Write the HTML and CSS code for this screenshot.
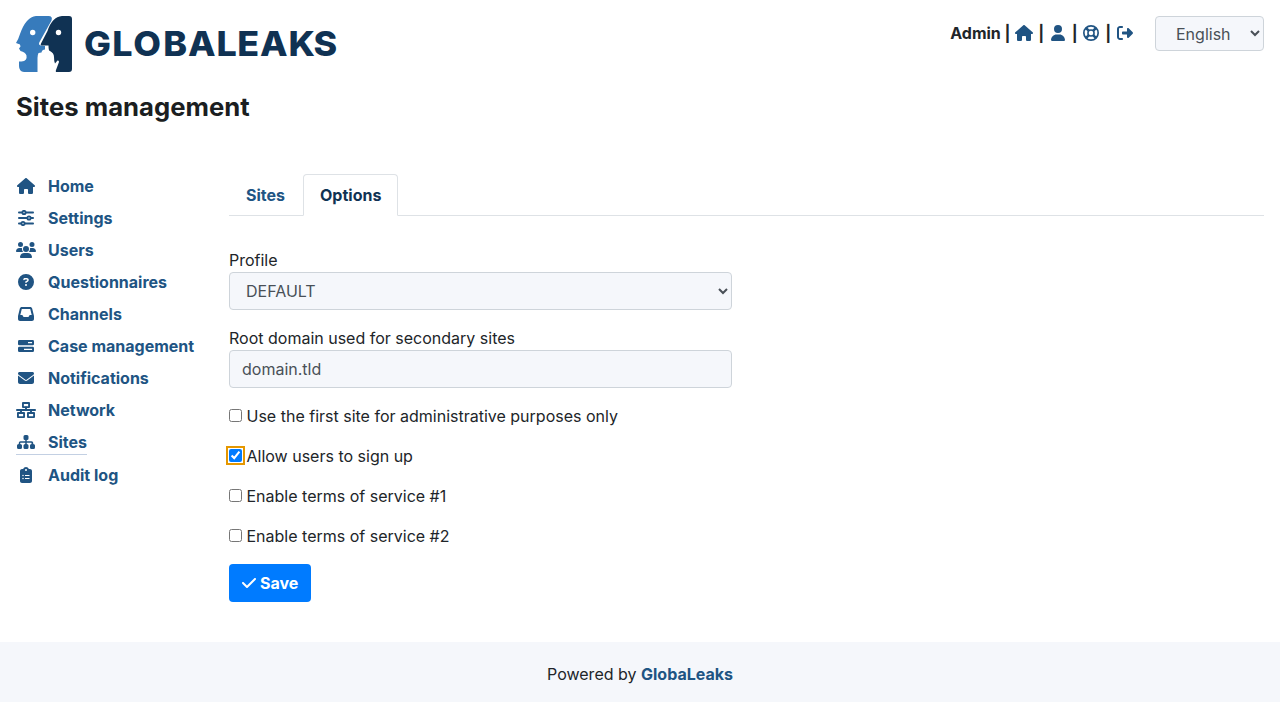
FILE: index.html
```html
<!DOCTYPE html>
<html lang="en">
<head>
<meta charset="utf-8">
<title>GlobaLeaks</title>
<link rel="stylesheet" href="styles.css">
</head>
<body>
<svg class="defs" aria-hidden="true">
  <symbol id="house" viewBox="-32 0 640 512"><path d="M575.8 255.5c0 18-15 32.1-32 32.1l-32 0 .7 160.2c0 2.7-.2 5.4-.5 8.1l0 16.2c0 22.1-17.9 40-40 40l-16 0c-1.1 0-2.2 0-3.3-.1c-1.4 .1-2.8 .1-4.2 .1L416 512l-24 0c-22.1 0-40-17.9-40-40l0-24 0-64c0-17.7-14.3-32-32-32l-64 0c-17.7 0-32 14.3-32 32l0 64 0 24c0 22.1-17.9 40-40 40l-24 0-31.9 0c-1.5 0-3-.1-4.5-.2c-1.2 .1-2.4 .2-3.6 .2l-16 0c-22.1 0-40-17.9-40-40l0-112c0-.9 0-1.9 .1-2.8l0-69.7-32 0c-18 0-32-14-32-32.1c0-9 3-17 10-24L266.4 8c7-7 15-8 22-8s15 2 21 7L564.8 231.5c8 7 12 15 11 24z"/></symbol>
  <symbol id="user" viewBox="-96 0 640 512"><path d="M224 256A128 128 0 1 0 224 0a128 128 0 1 0 0 256zm-45.7 48C79.8 304 0 383.8 0 482.3C0 498.7 13.3 512 29.7 512l388.6 0c16.4 0 29.7-13.3 29.7-29.7C448 383.8 368.2 304 269.7 304l-91.4 0z"/></symbol>
  <symbol id="ring" viewBox="-64 0 640 512"><g fill="none" stroke="currentColor"><circle cx="256" cy="256" r="229" stroke-width="54"/><circle cx="256" cy="256" r="98" stroke-width="50"/><path stroke-width="84" d="M100 100l80 80M412 100l-80 80M100 412l80-80M412 412l-80-80"/></g></symbol>
  <symbol id="logout" viewBox="-64 0 640 512"><path d="M502.600 278.600c12.500-12.500 12.500-32.800 0-45.300l-128-128c-9.200-9.200-22.900-11.900-34.900-6.900S320 115.100 320 128l0 80-128 0c-17.700 0-32 14.300-32 32l0 32c0 17.700 14.300 32 32 32l128 0 0 80c0 12.900 7.800 24.600 19.800 29.600s25.700 2.200 34.900-6.900zM160 96c17.700 0 32-14.300 32-32s-14.300-32-32-32L96 32C43 32 0 75 0 128L0 384c0 53 43 96 96 96l64 0c17.700 0 32-14.300 32-32s-14.300-32-32-32l-64 0c-17.700 0-32-14.300-32-32l0-256c0-17.700 14.300-32 32-32z"/></symbol>
  <symbol id="sliders" viewBox="-64 0 640 512"><g fill="none" stroke="currentColor" stroke-width="60" stroke-linecap="round"><path d="M30 80h106M248 80h234M30 256h266M408 256h74M30 432h74M216 432h266"/><circle cx="192" cy="80" r="52"/><circle cx="352" cy="256" r="52"/><circle cx="160" cy="432" r="52"/></g></symbol>
  <symbol id="users" viewBox="0 0 640 512"><path d="M144 0a80 80 0 1 1 0 160A80 80 0 1 1 144 0zM512 0a80 80 0 1 1 0 160A80 80 0 1 1 512 0zM0 298.700C0 239.800 47.800 192 106.700 192l42.700 0c15.900 0 31 3.500 44.600 9.700c-1.300 7.200-1.900 14.700-1.900 22.300c0 38.200 16.800 72.500 43.300 96L21.300 320C9.600 320 0 310.400 0 298.700zM405.300 320l-.7 0c26.600-23.500 43.300-57.800 43.300-96c0-7.600-.7-15-1.900-22.300c13.600-6.300 28.700-9.700 44.600-9.700l42.700 0C592.200 192 640 239.800 640 298.700c0 11.800-9.600 21.300-21.300 21.300zM224 224a96 96 0 1 1 192 0 96 96 0 1 1-192 0zM128 485.300C128 411.700 187.700 352 261.300 352l117.400 0C452.300 352 512 411.700 512 485.300c0 14.700-11.900 26.700-26.700 26.700l-330.600 0c-14.800 0-26.700-11.900-26.700-26.700z"/></symbol>
  <symbol id="question" viewBox="-64 0 640 512"><path d="M256 512A256 256 0 1 0 256 0a256 256 0 1 0 0 512zM169.800 165.300c7.900-22.300 29.100-37.300 52.800-37.300l58.300 0c34.900 0 63.100 28.300 63.100 63.100c0 22.600-12.100 43.500-31.700 54.800L280 264.400c-.2 13-10.900 23.600-24 23.600c-13.300 0-24-10.700-24-24l0-13.500c0-8.600 4.600-16.500 12.100-20.800l44.300-25.400c4.700-2.700 7.600-7.700 7.600-13.100c0-8.400-6.800-15.100-15.100-15.100l-58.300 0c-3.400 0-6.400 2.100-7.500 5.300l-.4 1.200c-4.400 12.500-18.200 19-30.600 14.600s-19-18.200-14.600-30.600l.4-1.200zM224 352a32 32 0 1 1 64 0 32 32 0 1 1-64 0z"/></symbol>
  <symbol id="inbox" viewBox="-64 0 640 512"><path d="M121 32C91.600 32 66 52 58.900 80.500L1.900 308.400C.6 313.500 0 318.700 0 323.900L0 416c0 35.300 28.700 64 64 64l384 0c35.300 0 64-28.700 64-64l0-92.100c0-5.200-.6-10.400-1.900-15.500l-57-227.900C446 52 420.400 32 391 32L121 32zm0 64l270 0 48 192-51.200 0c-12.100 0-23.200 6.800-28.600 17.700l-14.300 28.600c-5.400 10.800-16.500 17.700-28.600 17.700l-120.400 0c-12.100 0-23.200-6.800-28.600-17.700l-14.300-28.600c-5.400-10.800-16.500-17.700-28.600-17.700L73 288 121 96z"/></symbol>
  <symbol id="bars" viewBox="-64 0 640 512"><path fill-rule="evenodd" d="M44 64h424q44 0 44 44v80q0 44-44 44H44q-44 0-44-44v-80q0-44 44-44zM320 130v36h130v-36zM44 280h424q44 0 44 44v80q0 44-44 44H44q-44 0-44-44v-80q0-44 44-44zM192 346v36h258v-36z"/></symbol>
  <symbol id="mail" viewBox="-64 0 640 512"><path d="M48 64C21.500 64 0 85.500 0 112c0 15.100 7.100 29.300 19.200 38.400L236.800 313.600c11.400 8.500 27 8.500 38.400 0L492.800 150.400c12.100-9.100 19.200-23.300 19.200-38.400c0-26.500-21.500-48-48-48L48 64zM0 176L0 384c0 35.300 28.700 64 64 64l384 0c35.300 0 64-28.700 64-64l0-208L294.400 339.200c-22.800 17.100-54 17.100-76.800 0L0 176z"/></symbol>
  <symbol id="network" viewBox="0 0 640 512"><g fill="none" stroke="currentColor" stroke-width="60" stroke-linejoin="round"><path d="M222 30h196v132H222zM62 350h196v132H62zM382 350h196v132H382z"/><path stroke-linecap="round" d="M30 256h580M320 162v94M160 256v94M480 256v94"/></g></symbol>
  <symbol id="sitemap" viewBox="-32 0 640 512"><path d="M256 32h64q48 0 48 48v64q0 48-48 48h-8v40h152q56 0 56 56v32q56 0 56 48v64q0 48-48 48h-64q-48 0-48-48v-64q0-48 48-48v-32q0-8-8-8H312v40q56 0 56 48v64q0 48-48 48h-64q-48 0-48-48v-64q0-48 56-48v-40H112q-8 0-8 8v32q56 0 56 48v64q0 48-48 48H48q-48 0-48-48v-64q0-48 56-48v-32q0-56 56-56h152v-40h-8q-48 0-48-48V80q0-48 48-48z"/></symbol>
  <symbol id="clipboard" viewBox="-128 0 640 512"><path fill-rule="evenodd" d="M192 0c-41.800 0-77.400 26.700-90.500 64H64C28.700 64 0 92.700 0 128v320c0 35.300 28.700 64 64 64h256c35.300 0 64-28.700 64-64V128c0-35.300-28.700-64-64-64h-37.500C269.400 26.700 233.800 0 192 0zm0 64a32 32 0 1 1 0 64 32 32 0 1 1 0-64zM72 272a24 24 0 1 1 48 0 24 24 0 1 1-48 0zm88-16h144v32H160zM72 368a24 24 0 1 1 48 0 24 24 0 1 1-48 0zm88-16h144v32H160z"/></symbol>
  <symbol id="check" viewBox="0 0 448 512"><path d="M438.600 105.400c12.500 12.500 12.500 32.800 0 45.300l-256 256c-12.500 12.500-32.800 12.500-45.300 0l-128-128c-12.500-12.500-12.500-32.800 0-45.300s32.800-12.500 45.300 0L160 338.700 393.400 105.400c12.500-12.500 32.800-12.500 45.300 0z"/></symbol>
</svg>
<header class="header">
  <svg class="logo" viewBox="0 0 322 56" role="img" aria-label="GlobaLeaks">
    <path fill="#377bbc" d="M20 0h12.500q4.500 0 3 4.500L23.500 26q-1.500 3 1.500 3.500l4 .5v3.500q-3 0-3.500 3l-3 .5q-1 2-1 5v14H8Q3 55.500 3 50v-4.500h2.500q6-.5 5-6-1-3.500-6-4.500L3 32.500l1.500-2-.5-2L0 27Q2.500 23 4 18 10 1 20 0z"/>
    <path fill="#103253" d="M46 0h7q3 0 3 3v50q0 3-3 3H40q-.5-1 0-2l3-8q0-2-1.500-1.500L39 47.500q-1-2-1-6.500 0-4-4-6-1.500 0-1.500-5.500h-7q-1.500-.5-.5-2L31.500 15Q36 1 46 0z"/>
    <circle cx="16.700" cy="16.500" r="2.700" fill="#fff"/><circle cx="42.500" cy="16.500" r="2.700" fill="#fff"/>
    <text class="logo-text" transform="scale(1.04 1)" y="39.700" x="65.500 92.500 112.700 141.700 165.400 192.700 212.700 234.700 262 286">GLOBALEAKS</text>
  </svg>
  <div class="tools">
    <b>Admin</b><b>|</b><a><svg class="icon"><use href="#house"/></svg></a><b>|</b><a><svg class="icon"><use href="#user"/></svg></a><b>|</b><a><svg class="icon"><use href="#ring"/></svg></a><b>|</b><a><svg class="icon"><use href="#logout"/></svg></a>
  </div>
  <select class="field language"><option>English</option></select>
</header>
<h1 class="title">Sites management</h1>
<div class="layout">
  <nav class="menu">
    <a><svg class="icon"><use href="#house"/></svg>Home</a>
    <a><svg class="icon"><use href="#sliders"/></svg>Settings</a>
    <a><svg class="icon"><use href="#users"/></svg>Users</a>
    <a><svg class="icon"><use href="#question"/></svg>Questionnaires</a>
    <a><svg class="icon"><use href="#inbox"/></svg>Channels</a>
    <a><svg class="icon"><use href="#bars"/></svg>Case management</a>
    <a><svg class="icon"><use href="#mail"/></svg>Notifications</a>
    <a><svg class="icon"><use href="#network"/></svg>Network</a>
    <a class="active"><svg class="icon"><use href="#sitemap"/></svg>Sites</a>
    <a><svg class="icon"><use href="#clipboard"/></svg>Audit log</a>
  </nav>
  <main class="content">
    <div class="tabs"><a class="tab">Sites</a><a class="tab current">Options</a></div>
    <form class="form">
      <label class="group">Profile<select class="field"><option>DEFAULT</option></select></label>
      <label class="group">Root domain used for secondary sites<input class="field" type="text" value="domain.tld"></label>
      <label class="option"><input type="checkbox">Use the first site for administrative purposes only</label>
      <label class="option"><input class="focused" type="checkbox" checked>Allow users to sign up</label>
      <label class="option"><input type="checkbox">Enable terms of service #1</label>
      <label class="option"><input type="checkbox">Enable terms of service #2</label>
      <button class="save" type="button"><svg class="tick"><use href="#check"/></svg>Save</button>
    </form>
  </main>
</div>
<footer class="footer">Powered by&nbsp;<a>GlobaLeaks</a></footer>
</body>
</html>
```
FILE: styles.css
```css
* { box-sizing: border-box; }
body { margin: 0; height: 702px; display: flex; flex-direction: column; overflow: hidden; background: #fff; color: #212529; font: 16px/24px Inter, sans-serif; }
.defs { display: none; }
a { color: #205483; font-weight: 700; }
b { font-weight: 700; color: #212529; }
.header { display: flex; padding: 16px 16px 0; height: 91px; }
.logo { width: 322px; height: 56px; margin-right: auto; }
.logo-text { font: 800 34.5px Inter, sans-serif; fill: #103253; }
.icon { display: block; width: 20px; height: 16px; fill: currentColor; }
.tools { display: flex; align-items: center; height: 33px; gap: 3.8px; }
.field { display: block; width: 100%; height: 38px; border: 1px solid #ced4da; border-radius: 4px; padding: 6px 12px; background: #f5f7fb; color: #495057; font: 16px/24px Inter, sans-serif; }
.language { width: 109px; height: 35px; margin-left: 20px; padding: 4px 0 4px 16px; }
.title { margin: 0 16px; font-size: 25.7px; line-height: 32px; font-weight: 700; color: #1b1e21; }
.layout { display: flex; padding: 51px 16px 0; height: 519px; }
.menu { width: 213px; display: flex; flex-direction: column; align-items: flex-start; gap: 8px; }
.menu a { display: flex; align-items: center; gap: 12px; }
.menu .active { border-bottom: 1px solid #c3d0e3; }
.content { flex: 1; }
.tabs { display: flex; gap: 1px; height: 42px; border-bottom: 1px solid #dee2e6; }
.tab { height: 42px; padding: 8px 16px; border: 1px solid transparent; border-radius: 4px 4px 0 0; }
.current { color: #103253; background: #fff; border-color: #dee2e6 #dee2e6 #fff; }
.form { width: 503px; padding-top: 32px; }
.group { display: block; margin-bottom: 16px; }
.option { display: flex; align-items: center; margin-bottom: 16px; }
.option input { width: 13px; height: 13px; margin: 0 4.5px 2px 0; accent-color: #007bff; }
.option .focused { outline: 2px solid #e59700; outline-offset: 1px; border-radius: 3px; }
.save { display: flex; align-items: center; gap: 4px; height: 38px; padding: 0 13px; border: 0; border-radius: 4px; background: #007bff; color: #fff; font: 700 16px/24px Inter, sans-serif; }
.tick { width: 14px; height: 16px; fill: currentColor; }
.footer { display: flex; justify-content: center; height: 60px; margin-top: auto; padding-top: 20px; background: #f5f7fb; }
```
